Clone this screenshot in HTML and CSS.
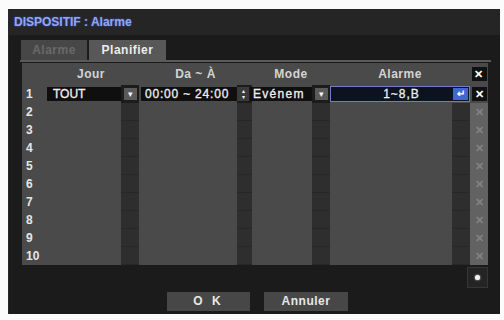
FILE: index.html
```html
<!DOCTYPE html>
<html>
<head>
<meta charset="utf-8">
<link rel="stylesheet" href="styles.css">
</head>
<body>
<div class="dialog">
  <div class="titlebar">DISPOSITIF : Alarme</div>
  <div class="content">
    <div class="tabs">
      <div class="tab tab-off">Alarme</div>
      <div class="tab tab-on">Planifier</div>
    </div>
    <div class="tabline"></div>
    <div class="table">
      <div class="row head">
        <div class="c num"></div>
        <div class="c pad"></div>
        <div class="c hjour">Jour</div>
        <div class="c hda">Da ~ À</div>
        <div class="c hmode">Mode</div>
        <div class="c halarm">Alarme</div>
        <div class="c xcol"><span class="xbox">✕</span></div>
      </div>
      <div class="row r1">
        <div class="c num">1</div>
        <div class="c pad"></div>
        <div class="c field fjour">TOUT</div>
        <div class="c strip"><span class="btn">&#9662;</span></div>
        <div class="c gap"></div>
        <div class="c field fda">00:00 ~ 24:00</div>
        <div class="c strip spin"><span class="btn sp">&#9652;<br>&#9662;</span></div>
        <div class="c field fmode">Evénem</div>
        <div class="c strip"><span class="btn">&#9662;</span></div>
        <div class="c field falarm">1~8,B</div>
        <div class="c strip enter-cell"><span class="enter">&#8629;</span></div>
        <div class="c xcol xact"><span class="xbox">✕</span></div>
      </div>
      <div class="row"><div class="c num">2</div><div class="c pad"></div><div class="c cell"></div><div class="c strip"></div><div class="c gap"></div><div class="c cell"></div><div class="c strip"></div><div class="c cell"></div><div class="c strip"></div><div class="c cell"></div><div class="c strip"></div><div class="c xcol xdim">✕</div></div>
      <div class="row"><div class="c num">3</div><div class="c pad"></div><div class="c cell"></div><div class="c strip"></div><div class="c gap"></div><div class="c cell"></div><div class="c strip"></div><div class="c cell"></div><div class="c strip"></div><div class="c cell"></div><div class="c strip"></div><div class="c xcol xdim">✕</div></div>
      <div class="row"><div class="c num">4</div><div class="c pad"></div><div class="c cell"></div><div class="c strip"></div><div class="c gap"></div><div class="c cell"></div><div class="c strip"></div><div class="c cell"></div><div class="c strip"></div><div class="c cell"></div><div class="c strip"></div><div class="c xcol xdim">✕</div></div>
      <div class="row"><div class="c num">5</div><div class="c pad"></div><div class="c cell"></div><div class="c strip"></div><div class="c gap"></div><div class="c cell"></div><div class="c strip"></div><div class="c cell"></div><div class="c strip"></div><div class="c cell"></div><div class="c strip"></div><div class="c xcol xdim">✕</div></div>
      <div class="row"><div class="c num">6</div><div class="c pad"></div><div class="c cell"></div><div class="c strip"></div><div class="c gap"></div><div class="c cell"></div><div class="c strip"></div><div class="c cell"></div><div class="c strip"></div><div class="c cell"></div><div class="c strip"></div><div class="c xcol xdim">✕</div></div>
      <div class="row"><div class="c num">7</div><div class="c pad"></div><div class="c cell"></div><div class="c strip"></div><div class="c gap"></div><div class="c cell"></div><div class="c strip"></div><div class="c cell"></div><div class="c strip"></div><div class="c cell"></div><div class="c strip"></div><div class="c xcol xdim">✕</div></div>
      <div class="row"><div class="c num">8</div><div class="c pad"></div><div class="c cell"></div><div class="c strip"></div><div class="c gap"></div><div class="c cell"></div><div class="c strip"></div><div class="c cell"></div><div class="c strip"></div><div class="c cell"></div><div class="c strip"></div><div class="c xcol xdim">✕</div></div>
      <div class="row"><div class="c num">9</div><div class="c pad"></div><div class="c cell"></div><div class="c strip"></div><div class="c gap"></div><div class="c cell"></div><div class="c strip"></div><div class="c cell"></div><div class="c strip"></div><div class="c cell"></div><div class="c strip"></div><div class="c xcol xdim">✕</div></div>
      <div class="row"><div class="c num">10</div><div class="c pad"></div><div class="c cell"></div><div class="c strip"></div><div class="c gap"></div><div class="c cell"></div><div class="c strip"></div><div class="c cell"></div><div class="c strip"></div><div class="c cell"></div><div class="c strip"></div><div class="c xcol xdim">✕</div></div>
    </div>
    <div class="dotrow"><div class="dotbtn"><span class="dot"></span></div></div>
    <div class="buttons">
      <div class="button ok">O K</div>
      <div class="button">Annuler</div>
    </div>
  </div>
</div>
</body>
</html>
```

FILE: styles.css
```css
html, body {
  margin: 0;
  padding: 0;
  background: #fbfbfb;
}
body {
  width: 504px;
  height: 320px;
  overflow: hidden;
  font-family: "Liberation Sans", Arial, sans-serif;
}
.dialog {
  margin: 9px 0 0 8px;
  width: 492px;
  height: 305px;
  background: #1b1b1b;
  box-sizing: border-box;
  border-left: 1px solid #2a2a2a;
}
.titlebar {
  height: 26px;
  background: #252525;
  color: #93a6f0;
  font-weight: bold;
  font-size: 12px;
  line-height: 27px;
  padding-left: 5px;
  text-shadow: 0 0 2px #3a5ad0;
}
.content {
  padding: 5px 0 0 12px;
}
.tabs {
  display: flex;
  gap: 2px;
  height: 20px;
}
.tab {
  height: 20px;
  line-height: 20px;
  font-size: 12px;
  font-weight: bold;
  text-align: center;
  letter-spacing: 0.5px;
}
.tab-off {
  width: 66px;
  background: #474747;
  color: #696969;
}
.tab-on {
  width: 77px;
  background: #585858;
  color: #ececec;
}
.tabline {
  margin-left: -1px;
  width: 471px;
  height: 2px;
  background: #5a5a5a;
}
.table {
  margin: 1px 0 0 1px;
  width: 466px;
  background: #4a4a4a;
}
.row {
  display: grid;
  grid-template-columns: 21px 4px 74px 18px 2px 96px 15px 60px 18px 122px 18px 18px;
  height: 18px;
}
.row.head {
  grid-template-columns: 21px 0px 96px 113px 78px 140px 18px;
  height: 22px;
}
.c {
  font-size: 12px;
  color: #e8e8e8;
  line-height: 18px;
}
.head .c {
  line-height: 22px;
  text-align: center;
  font-weight: bold;
  color: #d4d4d4;
  letter-spacing: 0.5px;
}
.num {
  font-weight: bold;
  padding-left: 4px;
  color: #e6e6e6;
}
.strip {
  background: #2e2e2e;
  border-bottom: 1px solid #272727;
  box-sizing: border-box;
  display: flex;
  align-items: center;
  justify-content: center;
}
.spin { justify-content: flex-start; }
.r1 .field {
  background: #0f0f0f;
  height: 14px;
  line-height: 14px;
  margin-top: 2px;
  color: #f0f0f0;
  white-space: nowrap;
  overflow: hidden;
  -webkit-text-stroke: 0.3px #f0f0f0;
}
.fjour { padding-left: 6px; }
.fda { padding-left: 4px; letter-spacing: 0.8px; }
.fmode { padding-left: 3px; margin-left: -2px; letter-spacing: 1.3px; }
.r1 .falarm {
  background: #0c1220;
  border: 1px solid #6d80c4;
  border-right: none;
  box-sizing: border-box;
  text-align: center;
  height: 16px;
  line-height: 14px;
  margin-top: 1px;
  padding-left: 20px;
  letter-spacing: 1px;
}
.r1 .strip { background: #1c1c1c; border-bottom: none; }
.btn {
  display: block;
  width: 13px;
  height: 12px;
  background: #5a5a5a;
  color: #f4f4f4;
  font-size: 9px;
  line-height: 12px;
  text-align: center;
}
.btn.sp {
  width: 12px;
  height: 14px;
  font-size: 6px;
  line-height: 6px;
  background: #3a3a3a;
  padding-top: 1px;
  box-sizing: border-box;
}
.r1 .enter-cell {
  background: #0c1220;
  border: 1px solid #6d80c4;
  border-left: none;
  height: 16px;
  margin-top: 1px;
  box-sizing: border-box;
}
.enter {
  display: block;
  width: 15px;
  height: 12px;
  background: #3f67d3;
  color: #ffffff;
  font-size: 10px;
  line-height: 12px;
  text-align: center;
  font-weight: bold;
}
.xcol {
  text-align: center;
}
.head .xcol, .r1 .xcol {
  display: flex;
  align-items: center;
  justify-content: center;
  background: #4a4a4a;
}
.xbox {
  display: block;
  width: 15px;
  height: 14px;
  background: #111111;
  color: #ffffff;
  font-size: 11px;
  line-height: 14px;
  font-weight: bold;
  text-align: center;
}
.xdim {
  background: #626262;
  color: #828282;
  font-size: 11px;
  font-weight: bold;
  line-height: 18px;
}
.dotrow {
  width: 467px;
  display: flex;
  justify-content: flex-end;
  margin-top: 2px;
}
.dotbtn {
  width: 19px;
  height: 19px;
  background: #242424;
  border: 1px solid #363636;
  display: flex;
  align-items: center;
  justify-content: center;
}
.dot {
  width: 5px;
  height: 5px;
  border-radius: 50%;
  background: #f2f2f2;
  box-shadow: 0 0 2px #ffffff;
}
.buttons {
  display: flex;
  gap: 14px;
  margin: 4px 0 0 146px;
}
.button {
  width: 84px;
  height: 19px;
  background: #474747;
  color: #e8e8e8;
  font-size: 12px;
  font-weight: bold;
  line-height: 19px;
  text-align: center;
  letter-spacing: 0.5px;
}
.ok {
  width: 83px;
  letter-spacing: 3px;
}
```
